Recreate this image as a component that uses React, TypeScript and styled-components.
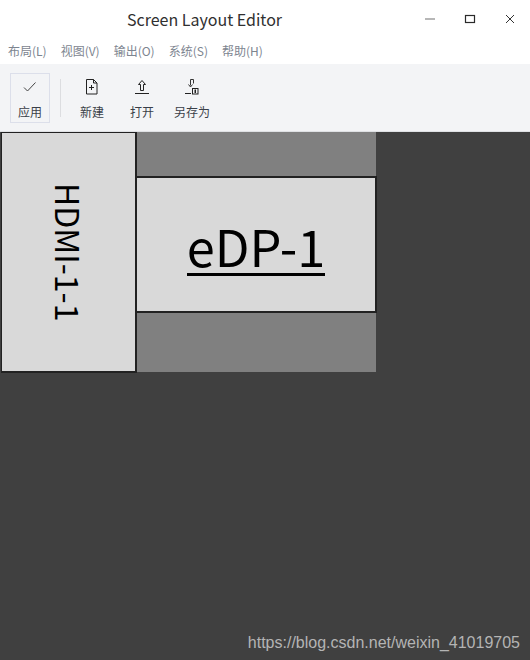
import styled, { createGlobalStyle } from 'styled-components'

const GlobalStyle = createGlobalStyle`
  html, body {
    margin: 0;
    padding: 0;
    background: #ffffff;
  }
  body {
    font-family: "Noto Sans CJK SC", "Noto Sans", sans-serif;
  }
`

const menus = ['布局(L)', '视图(V)', '输出(O)', '系统(S)', '帮助(H)']

export default function App() {
  return (
    <Window>
      <GlobalStyle />
      <TitleBar>
        <Title>Screen Layout Editor</Title>
        <WindowButtons>
          <WindowButton>
            <svg width="12" height="12" viewBox="0 0 12 12">
              <path d="M1 6h10" stroke="#999" strokeWidth="1.4" />
            </svg>
          </WindowButton>
          <WindowButton>
            <svg width="12" height="12" viewBox="0 0 12 12">
              <rect x="1.5" y="2.5" width="9" height="7" fill="none" stroke="#2a2a2a" strokeWidth="1.2" />
            </svg>
          </WindowButton>
          <WindowButton>
            <svg width="12" height="12" viewBox="0 0 12 12">
              <path d="M2 2l8 8M10 2l-8 8" stroke="#333" strokeWidth="1" fill="none" />
            </svg>
          </WindowButton>
        </WindowButtons>
      </TitleBar>
      <MenuBar>
        {menus.map((m) => (
          <MenuItem key={m}>{m}</MenuItem>
        ))}
      </MenuBar>
      <ToolBar>
        <ActionGroup>
          <ToolButton $active $width={40}>
            <ToolIcon>
              <svg width="16" height="16" viewBox="0 0 16 16">
                <path d="M2 8.500l3.500 3.500 8-8.500" stroke="#444" strokeWidth="1" fill="none" />
              </svg>
            </ToolIcon>
            <ToolLabel>应用</ToolLabel>
          </ToolButton>
        </ActionGroup>
        <Separator />
        <ToolButton $width={50}>
          <ToolIcon>
            <svg width="14" height="16" viewBox="0 0 14 16">
              <path d="M1.500 0.500h7l3.500 3.500v11h-10.500zM8.500 0.500v3.500h3.500" stroke="#222" strokeWidth="1" fill="none" />
              <path d="M6.500 6v5M4 8.500h5" stroke="#222" strokeWidth="1" fill="none" />
            </svg>
          </ToolIcon>
          <ToolLabel>新建</ToolLabel>
        </ToolButton>
        <ToolButton $width={50}>
          <ToolIcon>
            <svg width="16" height="16" viewBox="0 0 16 16">
              <path d="M8 1.500l3.500 4h-2v6h-3v-6h-2z" stroke="#222" strokeWidth="1" fill="none" />
              <path d="M1 14.500h14" stroke="#222" strokeWidth="1" fill="none" />
            </svg>
          </ToolIcon>
          <ToolLabel>打开</ToolLabel>
        </ToolButton>
        <ToolButton $width={50}>
          <ToolIcon>
            <svg width="14" height="16" viewBox="0 0 14 16">
              <path d="M5.500 0.500h3v4M5.500 0.500v6M3.500 5.500l2 2.500 2-2.500" stroke="#333" strokeWidth="1" fill="none" />
              <path d="M0 14.500h6" stroke="#222" strokeWidth="1" fill="none" />
              <rect x="7.500" y="9.500" width="5.500" height="5.500" fill="none" stroke="#222" strokeWidth="1" />
              <path d="M10.250 10.500v3.500" stroke="#222" strokeWidth="1.500" fill="none" />
            </svg>
          </ToolIcon>
          <ToolLabel>另存为</ToolLabel>
        </ToolButton>
      </ToolBar>
      <Canvas>
        <ScreenArea />
        <VerticalOutput>
          <VerticalName>HDMI-1-1</VerticalName>
        </VerticalOutput>
        <PrimaryOutput>
          <PrimaryName>eDP-1</PrimaryName>
        </PrimaryOutput>
        <Watermark>https://blog.csdn.net/weixin_41019705</Watermark>
      </Canvas>
    </Window>
  )
}

const Window = styled.div`
  width: 530px;
  height: 660px;
  display: flex;
  flex-direction: column;
  overflow: hidden;
  background: #ffffff;
`

const TitleBar = styled.div`
  height: 38px;
  flex: none;
  display: flex;
  align-items: center;
  padding-left: 127px;
`

const Title = styled.div`
  font-size: 16px;
  line-height: 38px;
  color: #303030;
`

const WindowButtons = styled.div`
  margin-left: auto;
  display: flex;
`

const WindowButton = styled.div`
  width: 40px;
  height: 36px;
  display: flex;
  align-items: center;
  justify-content: center;
`

const MenuBar = styled.div`
  height: 26px;
  flex: none;
  display: flex;
  align-items: center;
  gap: 14px;
  padding-left: 8px;
  padding-bottom: 2px;
  box-sizing: border-box;
`

const MenuItem = styled.div`
  font-size: 12px;
  color: #7d8590;
`

const ToolBar = styled.div`
  height: 68px;
  flex: none;
  box-sizing: border-box;
  display: flex;
  align-items: flex-start;
  padding: 9px 0 0 10px;
  background: #f3f4f6;
  border-bottom: 1px solid #dfe1e4;
`

const ActionGroup = styled.div`
  margin-right: 10px;
`

const ToolButton = styled.div<{ $active?: boolean; $width: number }>`
  width: ${(p) => p.$width}px;
  height: 50px;
  box-sizing: border-box;
  display: flex;
  flex-direction: column;
  align-items: center;
  border: 1px solid ${(p) => (p.$active ? '#dcdfea' : 'transparent')};
`

const ToolIcon = styled.div`
  height: 29px;
  padding-bottom: 4px;
  box-sizing: border-box;
  display: flex;
  align-items: center;
  justify-content: center;
`

const ToolLabel = styled.div`
  font-size: 12px;
  line-height: 18px;
  white-space: nowrap;
  color: #3a3f48;
`

const Separator = styled.div`
  width: 1px;
  height: 38px;
  margin: 6px 6px 0 0;
  background: #dcdde0;
`

const Canvas = styled.div`
  position: relative;
  flex: 1;
  background: #404040;
`

const ScreenArea = styled.div`
  position: absolute;
  left: 1px;
  top: 0;
  width: 375px;
  height: 240px;
  background: #808080;
`

const OutputBox = styled.div`
  position: absolute;
  box-sizing: border-box;
  background: #d9d9d9;
  border: 2px solid #222222;
  display: flex;
  align-items: center;
  justify-content: center;
  color: #000000;
`

const VerticalOutput = styled(OutputBox)`
  left: 1px;
  top: 0;
  width: 136px;
  height: 241px;
  border-width: 1px 2px 2px 1px;
`

const PrimaryOutput = styled(OutputBox)`
  left: 135px;
  top: 44px;
  width: 242px;
  height: 137px;
`

const VerticalName = styled.span`
  writing-mode: vertical-rl;
  font-size: 32px;
  line-height: 1;
`

const PrimaryName = styled.span`
  font-size: 50.5px;
  line-height: 1.1;
  margin-top: 5px;
  border-bottom: 3px solid #000000;
`

const Watermark = styled.div`
  position: absolute;
  right: 10px;
  bottom: 8px;
  font-family: "Liberation Sans", Arial, sans-serif;
  font-size: 16px;
  color: #b4b4b4;
`
